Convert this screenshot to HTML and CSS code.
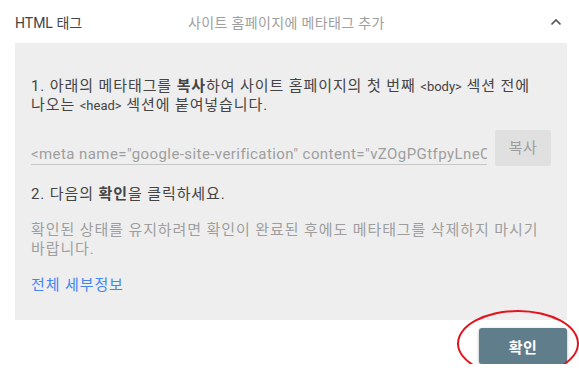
FILE: index.html
```html
<!DOCTYPE html>
<html lang="ko">
<head>
<meta charset="utf-8">
<link rel="stylesheet" href="styles.css">
</head>
<body>
<div class="card">
  <div class="header">
    <div class="title">HTML 태그</div>
    <div class="subtitle">사이트 홈페이지에 메타태그 추가</div>
    <svg class="chevron" width="12" height="8" viewBox="0 0 12 8"><path d="M1.5 6.5 L6 2 L10.5 6.5" fill="none" stroke="#555" stroke-width="1.7"/></svg>
  </div>
  <div class="panel">
    <p class="step">1. 아래의 메타태그를 <b>복사</b>하여 사이트 홈페이지의 첫 번째 <span class="code">&lt;body&gt;</span> 섹션 전에 나오는 <span class="code">&lt;head&gt;</span> 섹션에 붙여넣습니다.</p>
    <div class="meta-row">
      <div class="meta-field">&lt;meta name="google-site-verification" content="vZOgPGtfpyLneC0Yx3kQ7" /&gt;</div>
      <button class="copy-btn">복사</button>
    </div>
    <p class="step step2">2. 다음의 <b>확인</b>을 클릭하세요.</p>
    <p class="note">확인된 상태를 유지하려면 확인이 완료된 후에도 메타태그를 삭제하지 마시기 바랍니다.</p>
    <a class="details" href="#">전체 세부정보</a>
  </div>
  <div class="actions">
    <button class="verify-btn">확인</button>
    <span class="highlight"></span>
  </div>
</div>
</body>
</html>
```
FILE: styles.css
```css
html, body {
  margin: 0;
  padding: 0;
  background: #fff;
}
body {
  font-family: Roboto, "Noto Sans CJK KR", sans-serif;
  font-size: 14px;
  color: #444;
  word-break: keep-all;
}
.card {
  padding: 0 12px 0 15px;
}
.header {
  height: 43px;
  display: flex;
  align-items: center;
  box-sizing: border-box;
}
.title {
  width: 173px;
  color: #444;
}
.subtitle {
  flex: 1;
  color: #9e9e9e;
  letter-spacing: 0.35px;
}
.chevron {
  margin-right: 5px;
}
.panel {
  background: #eeeeee;
  padding: 34px 16px 25px 16px;
}
p {
  margin: 0;
  line-height: 19px;
}
.step, .note, .details {
  font-size: 15px;
  letter-spacing: 0.9px;
}
.code {
  font-size: 13px;
  letter-spacing: 0;
}
.step b {
  font-weight: 700;
}
.meta-row {
  display: flex;
  gap: 8px;
  margin-top: 15px;
  align-items: flex-start;
}
.meta-field {
  flex: 1;
  min-width: 0;
  height: 35px;
  box-sizing: border-box;
  padding-top: 15px;
  line-height: 19px;
  border-bottom: 1px solid #c8c8c8;
  white-space: nowrap;
  overflow: hidden;
  color: #9e9e9e;
  font-size: 15px;
  letter-spacing: 0.42px;
}
.copy-btn {
  width: 56px;
  height: 36px;
  border: 0;
  border-radius: 3px;
  background: #e0e0e0;
  color: #9e9e9e;
  font-family: inherit;
  font-size: 15px;
  letter-spacing: 0.5px;
  padding: 0 0 3px 0;
}
.step2 {
  margin-top: 19px;
}
.note {
  margin-top: 17px;
  color: #9e9e9e;
}
.details {
  display: block;
  margin-top: 17px;
  line-height: 19px;
  color: #4285f4;
  text-decoration: none;
}
.actions {
  position: relative;
  display: flex;
  justify-content: flex-end;
  padding-top: 8px;
}
.verify-btn {
  width: 88px;
  height: 36px;
  border: 0;
  border-radius: 3px;
  background: #607d8b;
  color: #fff;
  font-family: inherit;
  font-size: 15px;
  font-weight: 700;
  letter-spacing: 0.5px;
  box-shadow: 0 1px 3px rgba(0,0,0,0.35);
}
.highlight {
  position: absolute;
  left: 442px;
  top: -10px;
  width: 118px;
  height: 63px;
  border: 2px solid #e3141c;
  border-radius: 50%;
  pointer-events: none;
}
```
